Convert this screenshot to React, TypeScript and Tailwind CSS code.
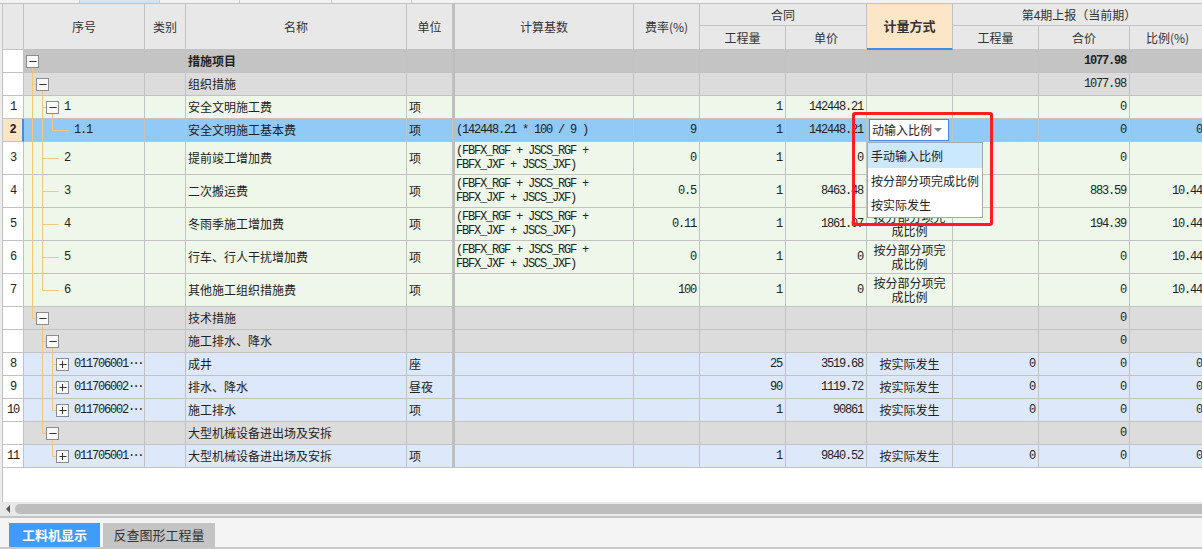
import React from 'react';

const COLS =
  'grid grid-cols-[21px_121px_41px_221px_46px_2px_179px_66px_86px_81px_86px_86px_91px_76px]';
const CJK = "font-['Noto_Sans_CJK_SC',sans-serif]";
const MONO = "font-['Liberation_Mono','Noto_Sans_CJK_SC',monospace] text-[12px] tracking-[-1.2px]";
const LINE = 'border-r border-b border-[#c2c2c2]';

type Tone = 'top' | 'group' | 'green' | 'sel' | 'blue';

interface Row {
  no?: string;
  tone: Tone;
  tall?: boolean;
  level: number;
  box?: '-' | '+';
  guides: number[];
  last?: boolean;
  code?: string;
  more?: boolean;
  name: string;
  bold?: boolean;
  unit?: string;
  formula?: string[];
  rate?: string;
  qty?: string;
  price?: string;
  method?: string;
  curQty?: string;
  total?: string;
  ratio?: string;
}

const toneBg: Record<Tone, string> = {
  top: 'bg-[#c4c4c4]',
  group: 'bg-[#dcdcdc]',
  green: 'bg-[#eef7e9]',
  sel: 'bg-[#91c9f7]',
  blue: 'bg-[#dde9fb]',
};

const FX = ['(FBFX_RGF + JSCS_RGF +', 'FBFX_JXF + JSCS_JXF)'];
const BY_PART = '按分部分项完成比例';
const ACTUAL = '按实际发生';

// rows 3 and 4 sit under the open dropdown, so their 计量方式 text is not drawn
const rows: Row[] = [
  { tone: 'top', level: 0, box: '-', guides: [], name: '措施项目', bold: true, total: '1077.98' },
  { tone: 'group', level: 1, box: '-', guides: [], name: '组织措施', total: '1077.98' },
  { no: '1', tone: 'green', level: 2, box: '-', guides: [0], code: '1', name: '安全文明施工费', unit: '项', qty: '1', price: '142448.21', total: '0' },
  { no: '2', tone: 'sel', level: 3, guides: [0, 1], last: true, code: '1.1', name: '安全文明施工基本费', unit: '项', formula: ['(142448.21 * 100 / 9 )'], rate: '9', qty: '1', price: '142448.21', method: 'editor', total: '0', ratio: '0' },
  { no: '3', tone: 'green', tall: true, level: 2, guides: [0], code: '2', name: '提前竣工增加费', unit: '项', formula: FX, rate: '0', qty: '1', price: '0', total: '0' },
  { no: '4', tone: 'green', tall: true, level: 2, guides: [0], code: '3', name: '二次搬运费', unit: '项', formula: FX, rate: '0.5', qty: '1', price: '8463.48', total: '883.59', ratio: '10.44' },
  { no: '5', tone: 'green', tall: true, level: 2, guides: [0], code: '4', name: '冬雨季施工增加费', unit: '项', formula: FX, rate: '0.11', qty: '1', price: '1861.07', method: BY_PART, total: '194.39', ratio: '10.44' },
  { no: '6', tone: 'green', tall: true, level: 2, guides: [0], code: '5', name: '行车、行人干扰增加费', unit: '项', formula: FX, rate: '0', qty: '1', price: '0', method: BY_PART, total: '0', ratio: '10.44' },
  { no: '7', tone: 'green', tall: true, level: 2, guides: [0], last: true, code: '6', name: '其他施工组织措施费', unit: '项', rate: '100', qty: '1', price: '0', method: BY_PART, total: '0', ratio: '10.44' },
  { tone: 'group', level: 1, box: '-', guides: [], last: true, name: '技术措施', total: '0' },
  { tone: 'group', level: 2, box: '-', guides: [], name: '施工排水、降水', total: '0' },
  { no: '8', tone: 'blue', level: 3, box: '+', guides: [1], code: '011706001', more: true, name: '成井', unit: '座', qty: '25', price: '3519.68', method: ACTUAL, curQty: '0', total: '0', ratio: '0' },
  { no: '9', tone: 'blue', level: 3, box: '+', guides: [1], code: '011706002', more: true, name: '排水、降水', unit: '昼夜', qty: '90', price: '1119.72', method: ACTUAL, curQty: '0', total: '0', ratio: '0' },
  { no: '10', tone: 'blue', level: 3, box: '+', guides: [1], last: true, code: '011706002', more: true, name: '施工排水', unit: '项', qty: '1', price: '90861', method: ACTUAL, curQty: '0', total: '0', ratio: '0' },
  { tone: 'group', level: 2, box: '-', guides: [], last: true, name: '大型机械设备进出场及安拆', total: '0' },
  { no: '11', tone: 'blue', level: 3, box: '+', guides: [], last: true, code: '011705001', more: true, name: '大型机械设备进出场及安拆', unit: '项', qty: '1', price: '9840.52', method: ACTUAL, curQty: '0', total: '0', ratio: '0' },
];

/** Tree connectors + expand box drawn for the 序号 cell. */
function TreeGlyph({ row }: { row: Row }) {
  const h = row.tall ? 32 : 22;
  const mid = Math.floor(h / 2) + 0.5;
  const lx = (l: number) => 8.5 + 10 * l;
  const L = row.level;
  const bx = 2.5 + 10 * L;
  const w = 20 + 10 * L;
  const stroke = '#f7c679';

  return (
    <svg width={w} height={h} className="shrink-0">
      {row.guides.map((g) => (
        <line key={g} x1={lx(g)} x2={lx(g)} y1={0} y2={h} stroke={stroke} />
      ))}
      {L > 0 && (
        <>
          <line x1={lx(L - 1)} x2={lx(L - 1)} y1={0} y2={row.last ? mid : h} stroke={stroke} />
          <line x1={lx(L - 1)} x2={row.box ? bx : bx + 12} y1={mid} y2={mid} stroke={stroke} />
        </>
      )}
      {row.box === '-' && <line x1={lx(L)} x2={lx(L)} y1={mid + 6} y2={h} stroke={stroke} />}
      {row.box && (
        <>
          <rect x={bx} y={mid - 6} width={12} height={12} fill="#f9f9f9" stroke="#8c8c8c" />
          <line x1={bx + 3} x2={bx + 10} y1={mid} y2={mid} stroke="#333" />
          {row.box === '+' && <line x1={lx(L)} x2={lx(L)} y1={mid - 3.5} y2={mid + 3.5} stroke="#333" />}
        </>
      )}
    </svg>
  );
}

function Num({ v, tone, bold }: { v?: string; tone: string; bold?: boolean }) {
  return (
    <div className={`${LINE} ${tone} ${MONO} flex items-center justify-end pr-[3px] ${bold ? 'font-bold' : ''}`}>
      {v}
    </div>
  );
}

function MethodEditor() {
  return (
    <div className="-ml-px h-full w-[84px] border border-[#3d8ef2] bg-white flex items-center">
      <span className={`${CJK} text-[12px] pl-[2px] leading-none`}>动输入比例</span>
      <span className="ml-auto mr-[6px] border-x-[4px] border-x-transparent border-t-[4px] border-t-[#808080]" />
    </div>
  );
}

function BodyRow({ r }: { r: Row }) {
  const bg = toneBg[r.tone];
  const sel = r.tone === 'sel';
  return (
    <div className={`${COLS} ${r.tall ? 'h-[33px]' : 'h-[23px]'}`}>
      <div
        className={`border-b border-[#c2c2c2] ${MONO} flex items-center justify-center ${
          sel ? 'bg-[#fde4c4] font-bold border-r-2 border-r-[#3d8ef2]' : 'bg-white border-r'
        }`}
      >
        {r.no}
      </div>
      <div className={`${LINE} ${bg} flex items-center overflow-hidden`}>
        <TreeGlyph row={r} />
        {r.code && (
          <span className={`${MONO} whitespace-nowrap`}>
            {r.code}
            {r.more && <span className="tracking-[-2.6px]">···</span>}
          </span>
        )}
      </div>
      <div className={`${LINE} ${bg}`} />
      <div className={`${LINE} ${bg} ${CJK} text-[12px] flex items-center pl-[2px] whitespace-nowrap ${r.bold ? 'font-bold' : ''}`}>
        {r.name}
      </div>
      <div className={`${LINE} ${bg} ${CJK} text-[12px] flex items-center pl-[2px] whitespace-nowrap`}>{r.unit}</div>
      <div className="bg-[#bdbdbd]" />
      <div className={`${LINE} ${bg} ${MONO} leading-[14px] flex flex-col justify-center pl-[1px] whitespace-nowrap`}>
        {r.formula?.map((f, i) => (
          <span key={i}>{f}</span>
        ))}
      </div>
      <Num v={r.rate} tone={bg} />
      <Num v={r.qty} tone={bg} />
      <Num v={r.price} tone={bg} />
      <div className={`${LINE} ${bg} ${CJK} text-[12px] leading-[14px] flex items-center justify-center text-center px-[3px]`}>
        {r.method === 'editor' ? <MethodEditor /> : r.method}
      </div>
      <Num v={r.curQty} tone={bg} />
      <Num v={r.total} tone={bg} bold={r.bold} />
      <Num v={r.ratio} tone={bg} />
    </div>
  );
}

function Header() {
  const hc = `${LINE} bg-[#e8e8e8] flex items-center justify-center ${CJK} text-[12px] text-[#333] whitespace-nowrap`;
  return (
    <div className={`${COLS} grid-rows-[22px_24px]`}>
      <div className={`${hc} row-span-2`} />
      <div className={`${hc} row-span-2`}>序号</div>
      <div className={`${hc} row-span-2`}>类别</div>
      <div className={`${hc} row-span-2`}>名称</div>
      <div className={`${hc} row-span-2`}>单位</div>
      <div className="row-span-2 bg-[#bdbdbd]" />
      <div className={`${hc} row-span-2`}>计算基数</div>
      <div className={`${hc} row-span-2`}>费率(%)</div>
      <div className={`${hc} col-span-2`}>合同</div>
      <div
        className={`row-span-2 border-r border-b-2 border-r-[#c2c2c2] border-b-[#3d8ef2] bg-[#fde6c8] flex items-center justify-center ${CJK} text-[13px] font-bold text-[#333]`}
      >
        计量方式
      </div>
      <div className={`${hc} col-span-3`}>第4期上报（当前期）</div>
      <div className={hc}>工程量</div>
      <div className={hc}>单价</div>
      <div className={hc}>工程量</div>
      <div className={hc}>合价</div>
      <div className={hc}>比例(%)</div>
    </div>
  );
}

function TopStrip() {
  const seg = 'h-full border-r border-[#cccccc]';
  return (
    <div className="h-[4px] border-b border-[#c2c2c2] bg-[#f2f2f2] flex">
      <div className={`${seg} w-[80px]`} />
      <div className={`${seg} w-[80px] bg-[#cfe5fa]`} />
      <div className={`${seg} w-[80px]`} />
      <div className={`${seg} w-[92px]`} />
      <div className={`${seg} w-[80px]`} />
    </div>
  );
}

export default function App() {
  return (
    <div className="relative w-[1202px] h-[549px] overflow-hidden bg-[#ececec] text-[#222]">
      <TopStrip />
      <div className="ml-[2px] h-[498px] border-l border-[#c2c2c2] bg-white overflow-hidden">
        <div className="w-[1204px]">
          <Header />
          {rows.map((r, i) => (
            <BodyRow key={i} r={r} />
          ))}
        </div>
      </div>

      {/* horizontal scrollbar */}
      <div className="h-[14px] bg-[#e8e8e8] flex items-center pl-[6px]">
        <span className="border-y-[4px] border-y-transparent border-r-[4px] border-r-[#555]" />
        <div className="ml-[5px] flex-1 h-[10px] bg-[#bdbdbd] rounded-l-[5px]" />
      </div>
      <div className="h-[2px] bg-[#c4c4c4]" />

      {/* bottom tabs */}
      <div className="h-[31px] bg-[#f4f4f4] border-b-2 border-[#c8c8c8] flex items-end">
        <div className={`ml-[9px] w-[91px] h-[24px] bg-[#3f9cf8] text-white font-bold ${CJK} text-[13px] flex items-center justify-center`}>
          工料机显示
        </div>
        <div className={`ml-[3px] w-[112px] h-[24px] bg-[#c4c4c4] text-[#333] ${CJK} text-[13px] flex items-center justify-center`}>
          反查图形工程量
        </div>
      </div>

      {/* dropdown list of the 计量方式 editor */}
      <div className={`absolute left-[867px] top-[142px] w-[116px] h-[76px] bg-white border border-[#a8a8a8] ${CJK} text-[12px]`}>
        <div className="h-[25px] bg-[#cce8ff] flex items-center pl-[3px]">手动输入比例</div>
        <div className="h-[25px] flex items-center pl-[3px]">按分部分项完成比例</div>
        <div className="h-[24px] flex items-center pl-[3px]">按实际发生</div>
      </div>

      {/* red annotation frame */}
      <div className="absolute left-[852px] top-[112px] w-[141px] h-[114px] border-[3px] border-[#ff1e1e] rounded-[3px]" />
    </div>
  );
}
